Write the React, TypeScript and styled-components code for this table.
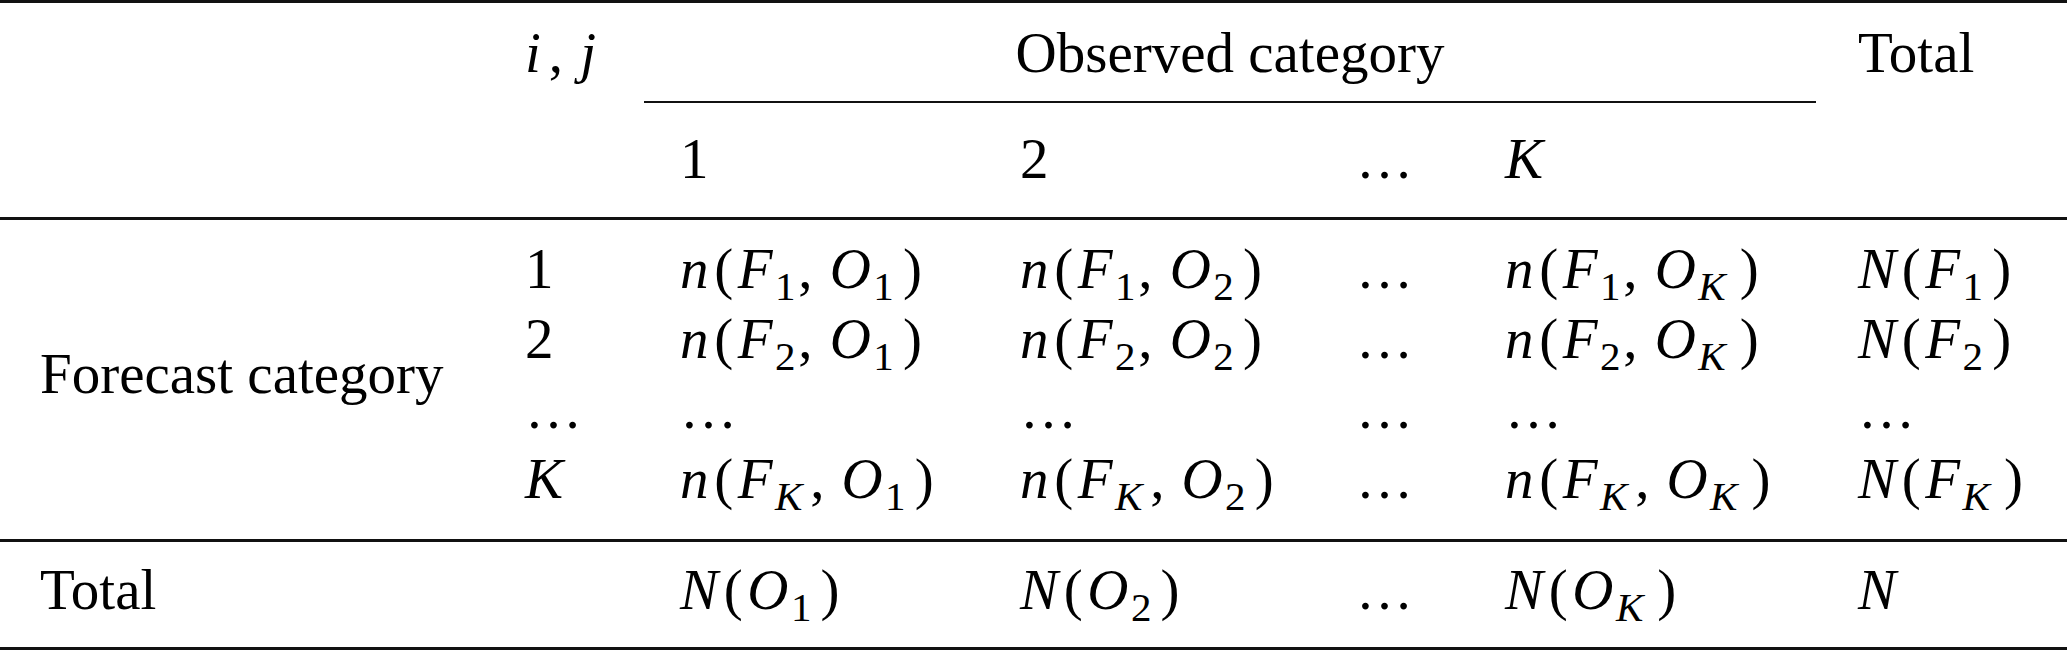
import styled, { createGlobalStyle, css } from "styled-components";

const GlobalStyle = createGlobalStyle`
  html, body {
    margin: 0;
    padding: 0;
    background: #fff;
  }
`;

const serif = css`
  font-family: "Liberation Serif", "Times New Roman", serif;
  font-size: 57px;
  line-height: 70px;
  color: #000;
`;

// shared column grid: label | i,j | 1 | 2 | ... | K | Total
const columns = css`
  display: grid;
  grid-template-columns: 489px 155px 340px 336px 149px 353px 1fr;
`;

const RULE = "#111";

const Table = styled.div`
  ${serif};
  width: 2067px;
  border-top: 3px solid ${RULE};
  border-bottom: 3px solid ${RULE};
`;

const Row = styled.div<{ $pt: number; $pb: number; $rule?: boolean; $lines?: number }>`
  ${columns};
  padding: ${(p) => p.$pt}px 0 ${(p) => p.$pb}px;
  border-top: ${(p) => (p.$rule ? `3px solid ${RULE}` : "none")};
  ${(p) => p.$lines && `grid-template-rows: repeat(${p.$lines}, 70px);`}
`;

const RuleRow = styled.div`
  ${columns};
`;

const CMidRule = styled.div`
  grid-column: 3 / 7;
  height: 2px;
  margin-right: 6px;
  background: ${RULE};
`;

const Cell = styled.div<{ $italic?: boolean }>`
  ${serif};
  padding-left: 36px;
  white-space: nowrap;
  font-style: ${(p) => (p.$italic ? "italic" : "normal")};
`;

const Label = styled.div<{ $rows?: number }>`
  ${serif};
  grid-column: 1;
  padding-left: 40px;
  white-space: nowrap;
  ${(p) => p.$rows && `grid-row: 1 / ${p.$rows + 1}; align-self: center;`}
`;

const Spanner = styled.div`
  ${serif};
  grid-column: 3 / 7;
  padding-right: 6px;
  text-align: center;
  white-space: nowrap;
`;

const V = styled.span`
  font-style: italic;
`;

const Sub = styled.span<{ $italic?: boolean }>`
  font-size: 0.72em;
  line-height: 0;
  vertical-align: -0.29em;
  margin-left: 0.06em;
  margin-right: ${(p) => (p.$italic ? "0.12em" : "0")};
  color: #000;
  font-style: ${(p) => (p.$italic ? "italic" : "normal")};
`;

const Paren = styled.span<{ $side: "l" | "r" }>`
  margin: ${(p) => (p.$side === "l" ? "0 0.08em 0 0.1em" : "0 0.04em 0 0.16em")};
`;

const Comma = styled.span<{ $wide?: boolean }>`
  margin-left: ${(p) => (p.$wide ? "0.14em" : "0.05em")};
  margin-right: 0.3em;
`;

const Idx = ({ k }: { k: string }) =>
  k === "K" ? <Sub $italic>K</Sub> : <Sub>{k}</Sub>;

const Count = ({ f, o }: { f: string; o: string }) => (
  <>
    <V>n</V>
    <Paren $side="l">(</Paren>
    <V>F</V>
    <Idx k={f} />
    <Comma>,</Comma>
    <V>O</V>
    <Idx k={o} />
    <Paren $side="r">)</Paren>
  </>
);

const Total = ({ v, k }: { v: string; k: string }) => (
  <>
    <V>N</V>
    <Paren $side="l">(</Paren>
    <V>{v}</V>
    <Idx k={k} />
    <Paren $side="r">)</Paren>
  </>
);

const forecast = ["1", "2", "dots", "K"];

export default function App() {
  return (
    <>
      <GlobalStyle />
      <Table>
        <Row $pt={15} $pb={13}>
          <Label />
          <Cell>
            <V>i</V>
            <Comma $wide>,</Comma>
            <V>j</V>
          </Cell>
          <Spanner>Observed category</Spanner>
          <Cell>Total</Cell>
        </Row>
        <RuleRow>
          <CMidRule />
        </RuleRow>
        <Row $pt={21} $pb={23}>
          <Label />
          <Cell />
          <Cell>1</Cell>
          <Cell>2</Cell>
          <Cell>…</Cell>
          <Cell $italic>K</Cell>
          <Cell />
        </Row>
        <Row $pt={14} $pb={25} $rule $lines={4}>
          <Label $rows={4}>Forecast category</Label>
          {forecast.map((f) =>
            f === "dots" ? (
              [0, 1, 2, 3, 4, 5].map((i) => <Cell key={`d${i}`}>…</Cell>)
            ) : (
              [
                <Cell key={`${f}a`} $italic={f === "K"}>
                  {f}
                </Cell>,
                <Cell key={`${f}b`}>
                  <Count f={f} o="1" />
                </Cell>,
                <Cell key={`${f}c`}>
                  <Count f={f} o="2" />
                </Cell>,
                <Cell key={`${f}d`}>…</Cell>,
                <Cell key={`${f}e`}>
                  <Count f={f} o="K" />
                </Cell>,
                <Cell key={`${f}f`}>
                  <Total v="F" k={f} />
                </Cell>,
              ]
            )
          )}
        </Row>
        <Row $pt={13} $pb={22} $rule>
          <Label>Total</Label>
          <Cell />
          <Cell>
            <Total v="O" k="1" />
          </Cell>
          <Cell>
            <Total v="O" k="2" />
          </Cell>
          <Cell>…</Cell>
          <Cell>
            <Total v="O" k="K" />
          </Cell>
          <Cell>
            <V>N</V>
          </Cell>
        </Row>
      </Table>
    </>
  );
}
